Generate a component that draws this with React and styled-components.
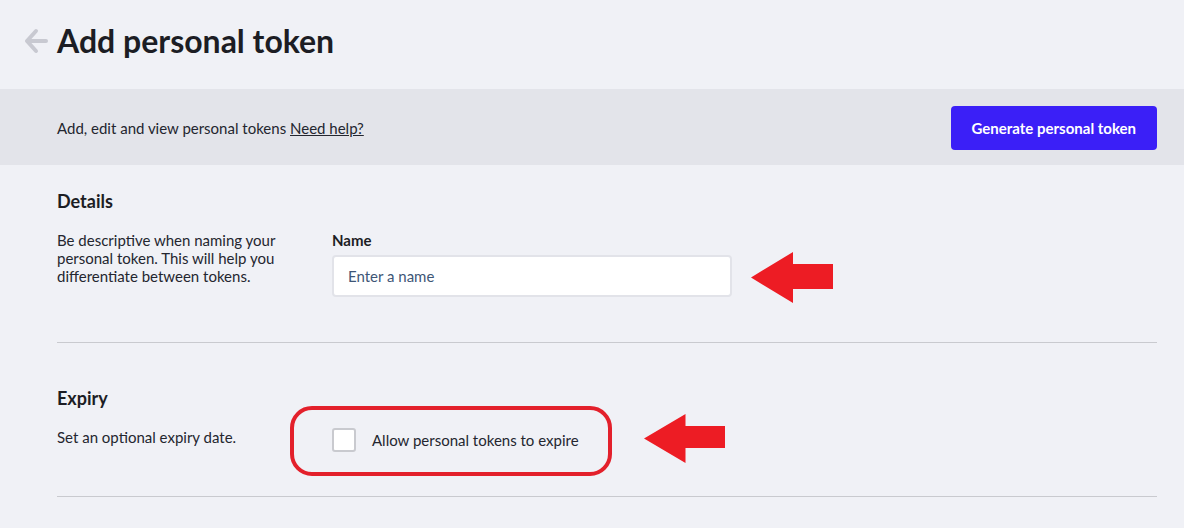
import React from 'react'
import styled, { createGlobalStyle } from 'styled-components'

const GlobalStyle = createGlobalStyle`
  html, body {
    margin: 0;
    padding: 0;
    background: #f0f1f6;
    font-family: Lato, "Open Sans", sans-serif;
    color: #24262f;
  }
`

const Page = styled.div`
  width: 1184px;
  min-height: 528px;
  background: #f0f1f6;
`

const Header = styled.header`
  box-sizing: border-box;
  height: 89px;
  padding: 21px 0 0 23px;
  display: flex;
  align-items: flex-start;
  gap: 8px;
`

const BackButton = styled.button`
  display: flex;
  align-items: center;
  justify-content: center;
  width: 26px;
  height: 40px;
  padding: 0;
  border: 0;
  background: none;
  color: #c8c9d1;
  cursor: pointer;
`

const Title = styled.h1`
  margin: 0;
  font-size: 32px;
  line-height: 40px;
  font-weight: 700;
  color: #1c1d24;
`

const Toolbar = styled.div`
  box-sizing: border-box;
  height: 76px;
  padding: 2px 27px 0 57px;
  background: #e3e4ea;
  display: flex;
  align-items: center;
  justify-content: space-between;
`

const Intro = styled.p`
  margin: 0;
  font-size: 15px;
  line-height: 18px;
  color: #24262f;

  a {
    color: inherit;
    text-decoration: underline;
  }
`

const PrimaryButton = styled.button`
  height: 44px;
  padding: 0 21px;
  border: 0;
  border-radius: 4px;
  background: #3b1ff7;
  color: #fff;
  font-family: inherit;
  font-size: 15px;
  font-weight: 700;
  cursor: pointer;
`

const Content = styled.main`
  padding: 0 27px 0 57px;
`

const Section = styled.section`
  padding: ${p => p.$top}px 0 ${p => p.$bottom}px;
  border-bottom: 1px solid #c9cacf;
`

const Heading = styled.h2`
  margin: 0 0 18px;
  font-size: 18px;
  line-height: 24px;
  font-weight: 700;
  color: #1c1d24;
`

const Row = styled.div`
  display: flex;
  align-items: flex-start;
`

const Description = styled.p`
  width: 275px;
  flex: none;
  margin: 0;
  font-size: 15px;
  line-height: 18px;
  color: #24262f;
  padding-right: 18px;
  box-sizing: border-box;
`

const Field = styled.div`
  display: flex;
  flex-direction: column;
`

const Label = styled.label`
  font-size: 15px;
  line-height: 18px;
  font-weight: 700;
  color: #1c1d24;
  margin-bottom: 6px;
`

const InputRow = styled.div`
  display: flex;
  align-items: flex-start;
  gap: 19px;
`

const TextInput = styled.input`
  box-sizing: border-box;
  width: 400px;
  height: 42px;
  padding: 0 14px;
  border: 2px solid #e2e3e9;
  border-radius: 4px;
  background: #fff;
  font-family: inherit;
  font-size: 15px;
  color: #24262f;
  outline: none;

  &::placeholder {
    color: #3e5676;
  }
`

const CheckRow = styled.div`
  display: flex;
  align-items: flex-start;
  gap: 32px;
`

const Highlight = styled.div`
  display: flex;
  align-items: center;
  gap: 16px;
  margin: -22px 0 -24px -42px;
  padding: 18px 29px 20px 38px;
  border: 4px solid #e3202b;
  border-radius: 22px;
`

const Checkbox = styled.span`
  box-sizing: border-box;
  width: 24px;
  height: 24px;
  border: 2px solid #c9cacf;
  border-radius: 3px;
  background: #fff;
`

const CheckLabel = styled.span`
  font-size: 15px;
  line-height: 24px;
  color: #24262f;
`

const Pointer = styled.svg`
  flex: none;
  margin: ${p => p.$offset}px 0 ${p => -p.$spill}px;
`

const ArrowLeft = ({ w, h, body, offset, spill }) => (
  <Pointer width={w} height={h} viewBox={`0 0 ${w} ${h}`} $offset={offset} $spill={spill}>
    <polygon
      fill="#ed1c24"
      points={`0,${h / 2} ${w / 2 + 1},0 ${w / 2 + 1},${body[0]} ${w},${body[0]} ${w},${body[1]} ${w / 2 + 1},${body[1]} ${w / 2 + 1},${h}`}
    />
  </Pointer>
)

export default function App() {
  return (
    <Page>
      <GlobalStyle />
      <Header>
        <BackButton aria-label="Back">
          <svg width="24" height="26" viewBox="0 0 24 26" fill="none" stroke="currentColor" strokeWidth="4" strokeLinecap="round" strokeLinejoin="round">
            <path d="M12 3 3 13l9 10" />
            <path d="M3.5 13H22" />
          </svg>
        </BackButton>
        <Title>Add personal token</Title>
      </Header>
      <Toolbar>
        <Intro>
          Add, edit and view personal tokens <a href="#">Need help?</a>
        </Intro>
        <PrimaryButton>Generate personal token</PrimaryButton>
      </Toolbar>
      <Content>
        <Section $top={24} $bottom={45}>
          <Heading>Details</Heading>
          <Row>
            <Description>
              Be descriptive when naming your personal token. This will help you differentiate between tokens.
            </Description>
            <Field>
              <Label>Name</Label>
              <InputRow>
                <TextInput placeholder="Enter a name" />
                <ArrowLeft w={82} h={51} body={[12, 37]} offset={-3} spill={12} />
              </InputRow>
            </Field>
          </Row>
        </Section>
        <Section $top={43} $bottom={44}>
          <Heading>Expiry</Heading>
          <Row>
            <Description>Set an optional expiry date.</Description>
            <CheckRow>
              <Highlight>
                <Checkbox />
                <CheckLabel>Allow personal tokens to expire</CheckLabel>
              </Highlight>
              <ArrowLeft w={81} h={49} body={[12, 34]} offset={-14} spill={15} />
            </CheckRow>
          </Row>
        </Section>
      </Content>
    </Page>
  )
}
